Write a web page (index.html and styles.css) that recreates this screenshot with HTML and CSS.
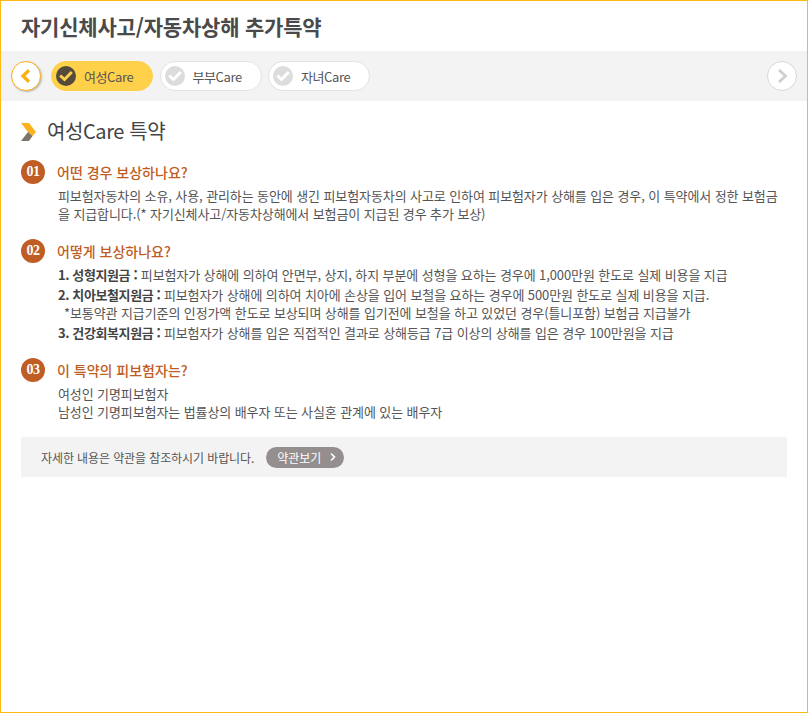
FILE: index.html
```html
<!DOCTYPE html>
<html lang="ko">
<head>
<meta charset="utf-8">
<title>자기신체사고/자동차상해 추가특약</title>
<link rel="stylesheet" href="styles.css">
</head>
<body>
<div class="popup">
  <h1 class="title">자기신체사고/자동차상해 추가특약</h1>
  <nav class="tabs">
    <button class="nav nav-prev" aria-label="이전"><svg width="14" height="16" viewBox="0 0 14 16"><path d="M10 2.2 L4 8 L10 13.8" fill="none" stroke="#fbb017" stroke-width="3.4"/></svg></button>
    <div class="pill pill-on"><span class="check check-on"><svg width="18" height="14" viewBox="0 0 18 14"><path d="M3.2 6.5 L7.5 10.5 L14.8 3" fill="none" stroke="#ffd04a" stroke-width="3"/></svg></span><span>여성Care</span></div>
    <div class="pill"><span class="check"><svg width="18" height="14" viewBox="0 0 18 14"><path d="M3.2 6.5 L7.5 10.5 L14.8 3" fill="none" stroke="#fff" stroke-width="3"/></svg></span><span>부부Care</span></div>
    <div class="pill"><span class="check"><svg width="18" height="14" viewBox="0 0 18 14"><path d="M3.2 6.5 L7.5 10.5 L14.8 3" fill="none" stroke="#fff" stroke-width="3"/></svg></span><span>자녀Care</span></div>
    <button class="nav nav-next" aria-label="다음"><svg width="14" height="16" viewBox="0 0 14 16"><path d="M4 2 L10.5 8 L4 14" fill="none" stroke="#cfcfcf" stroke-width="2.8"/></svg></button>
  </nav>
  <main class="content">
    <h2 class="heading"><svg class="chev" width="15" height="18" viewBox="0 0 15 18"><path d="M0 0 H8 L15 9 L11.5 13 L7 9 Z" fill="#fdb020"/><path d="M7 9 L11.5 13 L8 18 H0 Z" fill="#7d7468"/></svg><span class="heading-text">여성Care 특약</span></h2>
    <section class="item">
      <div class="q"><span class="num">01</span><h3>어떤 경우 보상하나요?</h3></div>
      <p class="a">피보험자동차의 소유, 사용, 관리하는 동안에 생긴 피보험자동차의 사고로 인하여 피보험자가 상해를 입은 경우, 이 특약에서 정한 보험금을 지급합니다.(* 자기신체사고/자동차상해에서 보험금이 지급된 경우 추가 보상)</p>
    </section>
    <section class="item">
      <div class="q"><span class="num">02</span><h3>어떻게 보상하나요?</h3></div>
      <ul class="a list">
        <li><b>1. 성형지원금 :</b> 피보험자가 상해에 의하여 안면부, 상지, 하지 부분에 성형을 요하는 경우에 1,000만원 한도로 실제 비용을 지급</li>
        <li><b>2. 치아보철지원금 :</b> 피보험자가 상해에 의하여 치아에 손상을 입어 보철을 요하는 경우에 500만원 한도로 실제 비용을 지급.
          <p class="note">*보통약관 지급기준의 인정가액 한도로 보상되며 상해를 입기전에 보철을 하고 있었던 경우(틀니포함) 보험금 지급불가</p></li>
        <li><b>3. 건강회복지원금 :</b> 피보험자가 상해를 입은 직접적인 결과로 상해등급 7급 이상의 상해를 입은 경우 100만원을 지급</li>
      </ul>
    </section>
    <section class="item">
      <div class="q"><span class="num">03</span><h3>이 특약의 피보험자는?</h3></div>
      <div class="a">
        <p>여성인 기명피보험자</p>
        <p>남성인 기명피보험자는 법률상의 배우자 또는 사실혼 관계에 있는 배우자</p>
      </div>
    </section>
    <div class="notice">
      <span>자세한 내용은 약관을 참조하시기 바랍니다.</span>
      <a class="terms" href="#">약관보기<svg width="8" height="10" viewBox="0 0 8 10"><path d="M2 1.5 L5.5 5 L2 8.5" fill="none" stroke="#fff" stroke-width="1.6"/></svg></a>
    </div>
  </main>
</div>
</body>
</html>
```
FILE: styles.css
```css
* { box-sizing: border-box; }
html, body { margin: 0; padding: 0; }
body {
  font-family: "Noto Sans CJK KR", "Noto Sans", sans-serif;
  color: #555;
  background: #fff;
}
h1, h2, h3, p, ul { margin: 0; padding: 0; font-weight: normal; }
li { list-style: none; }
.popup {
  width: 808px;
  height: 713px;
  border: 1px solid #fdb913;
  overflow: hidden;
}
.title {
  height: 50px;
  padding-left: 20px;
  font-size: 21px;
  font-weight: 700;
  line-height: 51px;
  color: #4a4a4a;
  letter-spacing: -0.2px;
}
.tabs {
  height: 50px;
  background: #f3f3f3;
  display: flex;
  align-items: center;
  padding: 0 10px;
  gap: 6.5px;
}
.nav {
  width: 30px;
  height: 30px;
  border-radius: 50%;
  padding: 0;
  display: flex;
  align-items: center;
  justify-content: center;
  background: #fff;
}
.nav-prev {
  border: 1px solid #fbb017;
  box-shadow: 1px 1px 2px rgba(0,0,0,.25);
  margin-right: 3.5px;
}
.nav-next {
  border: 1px solid #d8d8d8;
  margin-left: auto;
}
.pill {
  width: 102px;
  height: 30px;
  border-radius: 15px;
  background: #fff;
  border: 1px solid #e2e2e2;
  display: flex;
  align-items: center;
  padding-left: 4px;
  gap: 8px;
  font-size: 13px;
  letter-spacing: -0.4px;
  color: #555;
}
.pill-on {
  background: #ffd04a;
  border-color: #ffd04a;
}
.check {
  width: 20px;
  height: 20px;
  border-radius: 50%;
  background: #dcdcdc;
  display: flex;
  align-items: center;
  justify-content: center;
}
.check-on { background: #544b3d; }
.content { padding: 0 20px; }
.heading {
  display: flex;
  align-items: center;
  gap: 11px;
  height: 30px;
  margin-top: 16px;
  font-size: 20px;
  line-height: 28px;
  color: #444;
  letter-spacing: -0.4px;
}
.heading-text { padding-bottom: 2px; }
.item { margin-top: 13px; }
.item + .item { margin-top: 16px; }
.q { display: flex; align-items: center; gap: 12px; height: 24px; }
.num {
  width: 24px;
  height: 24px;
  border-radius: 50%;
  background: #bf5d24;
  color: #fff;
  font-family: "Liberation Serif", serif;
  font-weight: 700;
  font-size: 14px;
  letter-spacing: -0.5px;
  display: flex;
  align-items: center;
  justify-content: center;
}
.q h3 {
  font-size: 14px;
  font-weight: 500;
  color: #bf5d24;
  letter-spacing: 0;
}
.a {
  margin: 3px 0 0 37px;
  font-size: 13px;
  line-height: 18px;
  color: #555;
  letter-spacing: -0.1px;
  word-break: break-all;
}
.list li + li { margin-top: 2px; }
.a b { font-weight: 700; color: #444; letter-spacing: -0.4px; }
.note { padding-left: 6px; }
.notice {
  height: 40px;
  margin-top: 16px;
  background: #f3f3f3;
  display: flex;
  align-items: center;
  padding-left: 20px;
  gap: 12px;
  font-size: 12px;
  color: #555;
  letter-spacing: -0.1px;
}
.terms {
  flex: none;
  width: 78px;
  height: 21px;
  border-radius: 11px;
  background: #958e8e;
  color: #fff;
  text-decoration: none;
  display: flex;
  align-items: center;
  padding-left: 11px;
  gap: 8px;
  font-size: 12px;
  letter-spacing: 0;
}
```
